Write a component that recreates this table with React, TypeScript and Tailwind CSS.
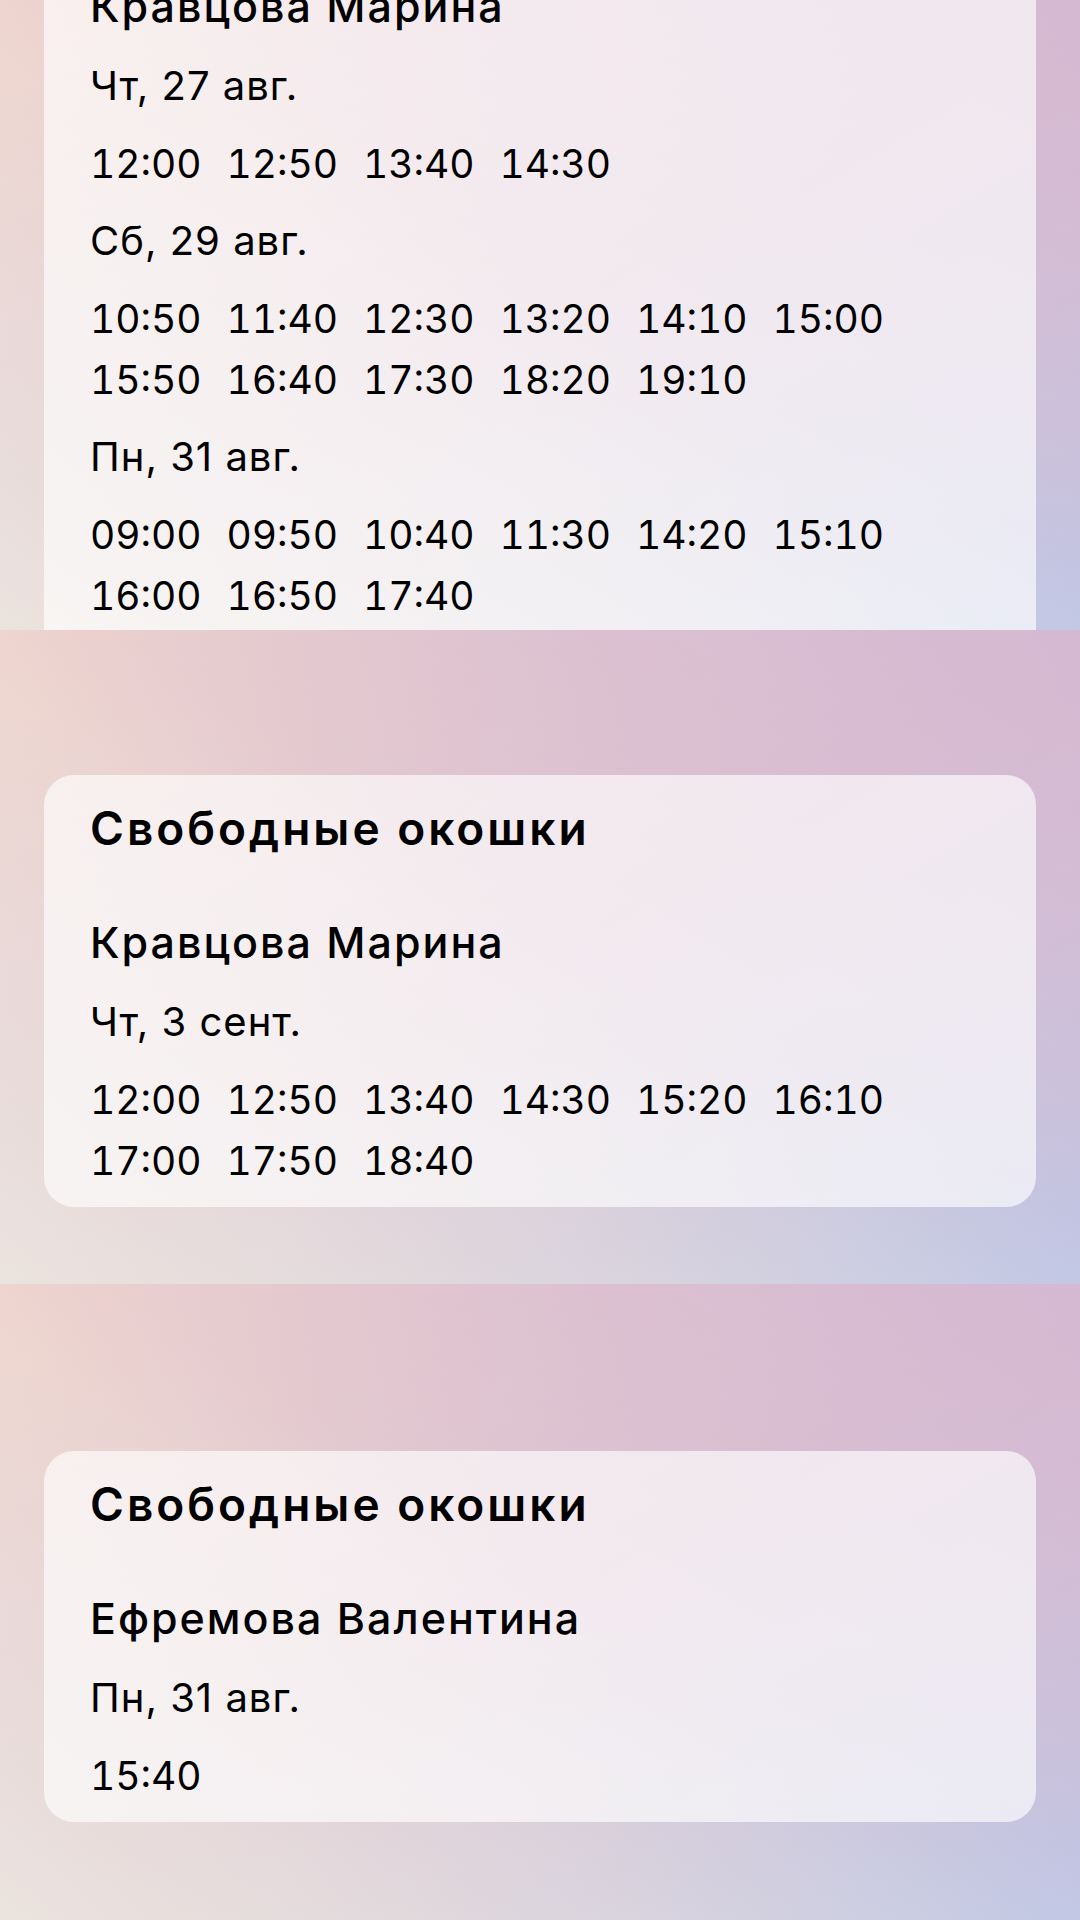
import React from 'react';

type Day = { date: string; times: string[] };

// same soft gradient behind every screen
const bg =
  "bg-[linear-gradient(to_bottom_left,rgba(213,184,210,0.95)_0%,rgba(213,184,210,0)_55%),linear-gradient(to_top_right,rgba(236,229,223,0.95)_0%,rgba(236,229,223,0)_55%),linear-gradient(to_bottom_right,#f1d6cd_0%,#dcc3d1_50%,#bcc7e7_100%)]";

const firstDays: Day[] = [
  { date: 'Чт, 27 авг.', times: ['12:00', '12:50', '13:40', '14:30'] },
  {
    date: 'Сб, 29 авг.',
    times: ['10:50', '11:40', '12:30', '13:20', '14:10', '15:00', '15:50', '16:40', '17:30', '18:20', '19:10'],
  },
  {
    date: 'Пн, 31 авг.',
    times: ['09:00', '09:50', '10:40', '11:30', '14:20', '15:10', '16:00', '16:50', '17:40'],
  },
];

const DayBlock: React.FC<{ day: Day; first?: boolean }> = ({ day, first }) => (
  <div className={first ? 'mt-[30px]' : 'mt-[22px]'}>
    <p className="text-[40px] leading-[50px] font-normal tracking-[1px]">{day.date}</p>
    <div className="mt-[22px] grid grid-cols-[repeat(6,136.5px)]">
      {day.times.map((t) => (
        <span key={t} className="text-[39px] leading-[61px] font-normal tabular-nums">
          {t}
        </span>
      ))}
    </div>
  </div>
);

const SlotsCard: React.FC<{ name: string; days: Day[] }> = ({ name, days }) => (
  <div className="mx-[44px] rounded-[30px] bg-white/65 pt-[28px] pb-[16px] pl-[46px]">
    <h2 className="text-[46px] leading-[50px] font-semibold tracking-[3px]">Свободные окошки</h2>
    <p className="mt-[64px] text-[43px] leading-[50px] font-medium tracking-[2px]">{name}</p>
    {days.map((d, i) => (
      <DayBlock key={d.date} day={d} first={i === 0} />
    ))}
  </div>
);

export default function App() {
  return (
    <div className="w-[1080px] h-[1920px] overflow-hidden text-black font-['Inter','Noto_Sans',sans-serif]">
      {/* screen 1: card scrolled, cut at both edges */}
      <section className={`h-[630px] overflow-hidden ${bg}`}>
        <div className="mx-[44px] -mt-[19px] bg-white/65 pl-[46px] pb-[40px]">
          <p className="text-[43px] leading-[50px] font-medium tracking-[2px]">Кравцова Марина</p>
          {firstDays.map((d, i) => (
            <DayBlock key={d.date} day={d} first={i === 0} />
          ))}
        </div>
      </section>

      {/* screen 2 */}
      <section className={`h-[654px] pt-[145px] ${bg}`}>
        <SlotsCard
          name="Кравцова Марина"
          days={[
            {
              date: 'Чт, 3 сент.',
              times: ['12:00', '12:50', '13:40', '14:30', '15:20', '16:10', '17:00', '17:50', '18:40'],
            },
          ]}
        />
      </section>

      {/* screen 3 */}
      <section className={`h-[636px] pt-[167px] ${bg}`}>
        <SlotsCard name="Ефремова Валентина" days={[{ date: 'Пн, 31 авг.', times: ['15:40'] }]} />
      </section>
    </div>
  );
}
